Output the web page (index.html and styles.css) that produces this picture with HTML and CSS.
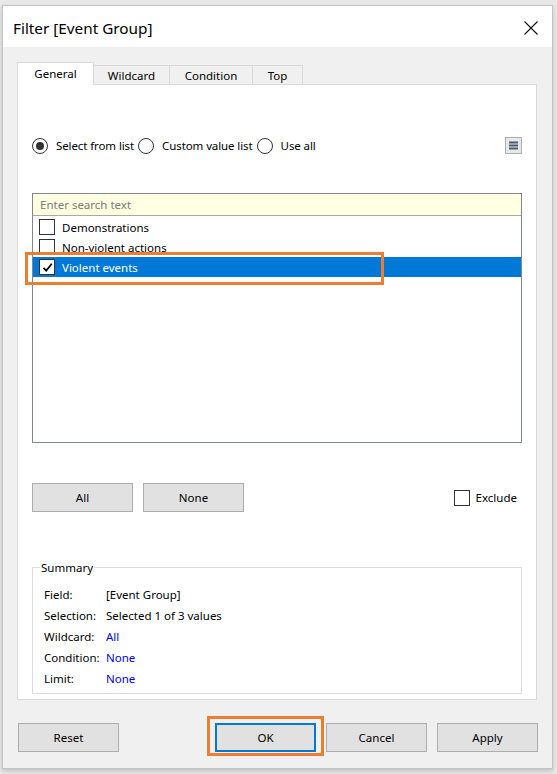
FILE: index.html
```html
<!DOCTYPE html>
<html>
<head>
<meta charset="utf-8">
<link rel="stylesheet" href="styles.css">
</head>
<body>
<div class="dialog">
  <div class="titlebar">
    <span class="title">Filter [Event Group]</span>
    <svg class="close" width="14" height="14" viewBox="0 0 14 14"><path d="M0.5 0.5 L13.5 13.5 M13.5 0.5 L0.5 13.5" stroke="#111" stroke-width="1.1" fill="none"/></svg>
  </div>
  <div class="body">
    <div class="tabs">
      <div class="tab active t-general">General</div>
      <div class="tab t-wild">Wildcard</div>
      <div class="tab t-cond">Condition</div>
      <div class="tab t-top">Top</div>
    </div>
    <div class="panel">
      <div class="mode-row">
        <span class="radio checked"></span><span class="rlabel">Select from list</span>
        <span class="radio"></span><span class="rlabel">Custom value list</span>
        <span class="radio"></span><span class="rlabel">Use all</span>
        <span class="menu-btn">
          <svg width="11" height="11" viewBox="0 0 11 11"><rect x="1" y="1.5" width="9" height="2" fill="#4b5a6e"/><rect x="1" y="4.5" width="9" height="2" fill="#4b5a6e"/><rect x="1" y="7.5" width="9" height="2" fill="#4b5a6e"/></svg>
        </span>
      </div>
      <div class="listbox">
        <div class="search">Enter search text</div>
        <div class="items">
          <div class="item"><span class="cb"></span><span>Demonstrations</span></div>
          <div class="item"><span class="cb"></span><span>Non-violent actions</span></div>
          <div class="item selected"><span class="cb"><svg width="13" height="13" viewBox="0 0 13 13"><path d="M2.5 6.8 L5.2 9.6 L10.8 2.8" stroke="#000" stroke-width="1.7" fill="none"/></svg></span><span>Violent events</span></div>
        </div>
        <div class="hl hl-item"></div>
      </div>
      <div class="btn-row">
        <button class="btn">All</button>
        <button class="btn">None</button>
        <span class="exclude"><span class="cb"></span><span>Exclude</span></span>
      </div>
      <fieldset class="summary">
        <legend>Summary</legend>
        <div class="srow"><span class="sk">Field:</span><span>[Event Group]</span></div>
        <div class="srow"><span class="sk">Selection:</span><span>Selected 1 of 3 values</span></div>
        <div class="srow"><span class="sk">Wildcard:</span><span class="link">All</span></div>
        <div class="srow"><span class="sk">Condition:</span><span class="link">None</span></div>
        <div class="srow"><span class="sk">Limit:</span><span class="link">None</span></div>
      </fieldset>
    </div>
    <div class="footer">
      <button class="btn">Reset</button>
      <span class="spacer"></span>
      <span class="ok-wrap"><button class="btn default">OK</button><span class="hl hl-ok"></span></span>
      <button class="btn">Cancel</button>
      <button class="btn">Apply</button>
    </div>
  </div>
</div>
</body>
</html>
```
FILE: styles.css
```css
* { box-sizing: border-box; }
html, body { margin: 0; padding: 0; }
body {
  width: 557px;
  height: 774px;
  background: #e9e9e9;
  font-family: "Noto Sans", "Open Sans", sans-serif;
  font-size: 11.5px;
  color: #000;
  padding: 5px 0 0 2px;
  overflow: hidden;
}
.dialog {
  width: 551px;
  height: 764px;
  border: 1px solid #c4c4c4;
  background: #f0f0f0;
  box-shadow: 0 2px 5px rgba(0,0,0,0.18);
  display: flex;
  flex-direction: column;
}
.titlebar {
  height: 41px;
  background: #fff;
  display: flex;
  align-items: center;
  padding: 0 14px 0 10px;
  flex: none;
}
.title {
  font-size: 15.3px;
  flex: 1;
  position: relative;
  top: 1px;
}
.close { flex: none; position: relative; top: 1px; }
.body {
  flex: 1;
  padding: 15px 15px 0 14px;
  display: flex;
  flex-direction: column;
}
.tabs {
  height: 22px;
  display: flex;
  align-items: flex-end;
  position: relative;
  z-index: 1;
}
.tab {
  height: 19px;
  border: 1px solid #d9d9d9;
  border-bottom: none;
  background: #f0f0f0;
  display: flex;
  align-items: center;
  justify-content: center;
  margin-left: -1px;
}
.tab.active {
  height: 23px;
  margin-bottom: -1px;
  background: #fff;
  margin-left: 0;
  padding-bottom: 2px;
}
.t-general { width: 77px; }
.t-wild { width: 77px; }
.t-cond { width: 84px; }
.t-top { width: 51px; }
.panel {
  width: 520px;
  height: 616px;
  background: #fff;
  border: 1px solid #d9d9d9;
  padding: 52px 14px 5px 14px;
  display: flex;
  flex-direction: column;
}
.mode-row {
  display: flex;
  align-items: center;
  height: 17px;
}
.radio {
  width: 16px;
  height: 16px;
  border: 1px solid #333;
  border-radius: 50%;
  display: flex;
  align-items: center;
  justify-content: center;
  flex: none;
}
.radio.checked::after {
  content: "";
  width: 8px;
  height: 8px;
  border-radius: 50%;
  background: #333;
}
.rlabel { margin: 0 4px 0 8px; letter-spacing: -0.1px; }
.menu-btn {
  margin-left: auto;
  width: 17px;
  height: 17px;
  border: 1px solid #adadad;
  background: #e8e8e8;
  display: flex;
  align-items: center;
  justify-content: center;
}
.listbox {
  position: relative;
  margin-top: 39px;
  height: 250px;
  border: 1px solid #828790;
  flex: none;
}
.search {
  height: 22px;
  background: #ffffe1;
  border-bottom: 1px solid #a8a8a8;
  color: #7a7a7a;
  display: flex;
  align-items: center;
  padding-left: 7px;
}
.items { padding-top: 1px; }
.item {
  height: 20px;
  display: flex;
  align-items: center;
  padding-left: 6px;
}
.item .cb { margin-right: 7px; }
.item.selected { background: #0078d7; color: #fff; }
.cb {
  width: 16px;
  height: 16px;
  border: 1px solid #333;
  background: #fff;
  display: flex;
  align-items: center;
  justify-content: center;
  flex: none;
}
.hl {
  position: absolute;
  border: 3px solid #ed7d31;
  pointer-events: none;
}
.hl-item {
  left: -8px;
  top: 58px;
  width: 359px;
  height: 33px;
}
.btn-row {
  margin-top: 40px;
  display: flex;
  align-items: center;
  gap: 10px;
  flex: none;
}
.btn {
  width: 101px;
  height: 29px;
  background: #e1e1e1;
  border: 1px solid #adadad;
  font-family: inherit;
  font-size: 11.5px;
  color: #000;
  padding: 0;
  margin: 0;
}
.exclude {
  margin-left: auto;
  margin-right: 5px;
  display: flex;
  align-items: center;
  gap: 6px;
}
.summary {
  margin: auto 0 0 0;
  height: 134px;
  border: 1px solid #dcdcdc;
  padding: 9px 10px 0 11px;
  min-width: 0;
}
.summary legend {
  padding: 0 1px;
  margin-left: -4px;
}
.srow {
  height: 21px;
  display: flex;
  align-items: center;
}
.sk { width: 62px; flex: none; }
.link { color: #0000ee; }
.footer {
  display: flex;
  align-items: center;
  gap: 10px;
  padding: 23px 0 0 1px;
  margin-right: -1px;
}
.spacer { flex: 1; }
.ok-wrap { position: relative; display: flex; }
.btn.default { border: 2px solid #0078d7; }
.hl-ok {
  left: -8px;
  top: -7px;
  width: 117px;
  height: 40px;
}
.footer .btn { width: 101px; }
```
